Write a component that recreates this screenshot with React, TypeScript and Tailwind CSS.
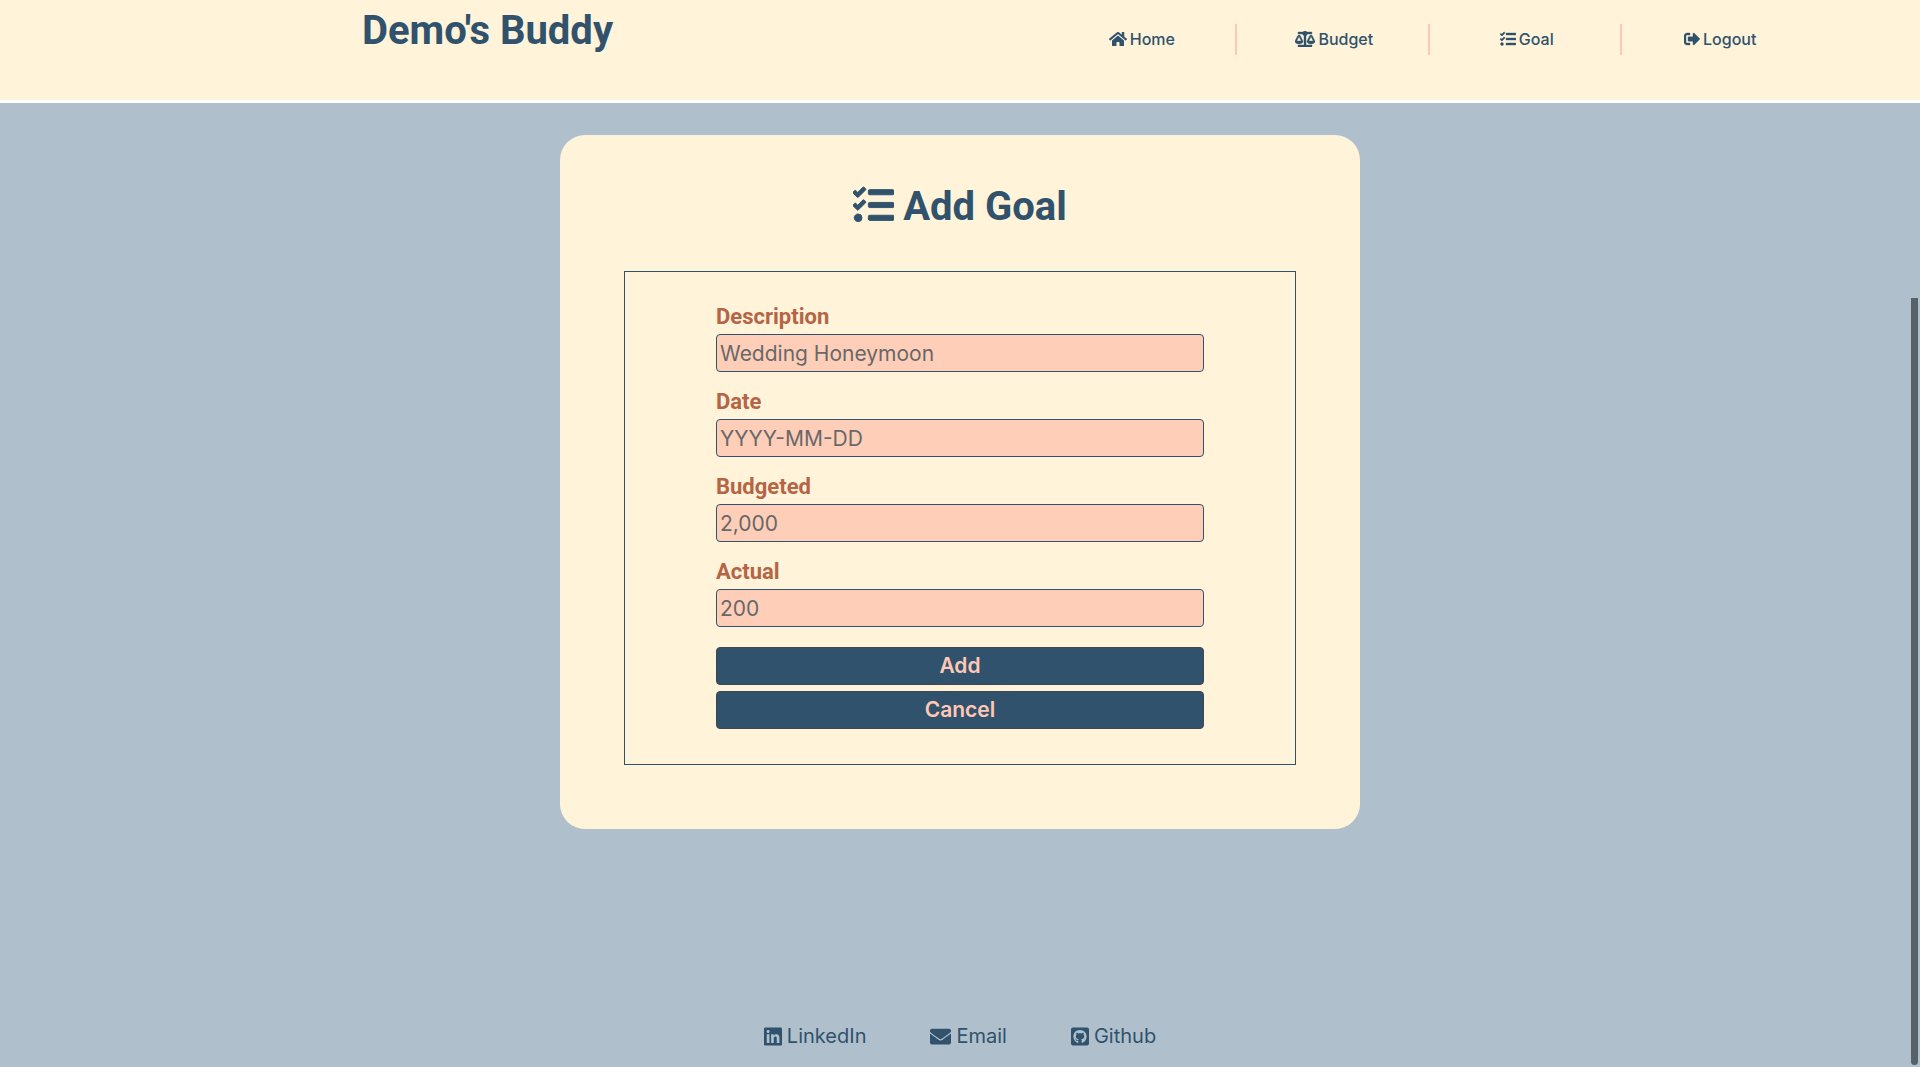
import {
  FaBalanceScale,
  FaEnvelope,
  FaGithubSquare,
  FaHome,
  FaLinkedin,
  FaSignOutAlt,
  FaTasks,
} from "react-icons/fa";

const navItems = [
  { label: "Home", icon: <FaHome className="h-4 w-[18px]" /> },
  { label: "Budget", icon: <FaBalanceScale className="h-4 w-5" strokeWidth={12} /> },
  { label: "Goal", icon: <FaTasks className="h-4 w-4" strokeWidth={12} /> },
  { label: "Logout", icon: <FaSignOutAlt className="h-4 w-4" strokeWidth={12} /> },
];

const fields = [
  { id: "description", label: "Description", placeholder: "Wedding Honeymoon" },
  { id: "date", label: "Date", placeholder: "YYYY-MM-DD" },
  { id: "budgeted", label: "Budgeted", placeholder: "2,000" },
  { id: "actual", label: "Actual", placeholder: "200" },
];

const footerLinks = [
  { label: "LinkedIn", icon: <FaLinkedin className="h-[21px] w-[18px]" /> },
  { label: "Email", icon: <FaEnvelope className="h-[21px] w-[21px]" /> },
  { label: "Github", icon: <FaGithubSquare className="h-[21px] w-[18px]" /> },
];

function Header() {
  return (
    <header className="flex h-[103px] items-start justify-between border-b-[3px] border-white bg-[#fff3d9] pr-[5.5%] pl-[18.85%]">
      <h1 className="pt-[7px] font-['Roboto',sans-serif] text-[40px] leading-[48px] font-bold whitespace-nowrap">
        Demo's Buddy
      </h1>
      <nav className="w-[53%] pt-6">
        <ul className="grid grid-cols-4">
          {navItems.map((item) => (
            <li
              key={item.label}
              className="flex h-[31px] items-center justify-center border-r-2 border-[#ffc8b4] pl-1 last:border-r-0"
            >
              <a href="#" className="flex items-center gap-[3px] pb-[2px] text-base leading-6 font-medium">
                {item.icon}
                {item.label}
              </a>
            </li>
          ))}
        </ul>
      </nav>
    </header>
  );
}

function GoalForm() {
  return (
    <form className="mt-10 flex flex-col border border-[#30526c] px-[91px] pt-[30px] pb-[35px]">
      {fields.map((field) => (
        <div key={field.id} className="mb-[15px] flex flex-col">
          <label
            htmlFor={field.id}
            className="mb-[2px] font-['Roboto',sans-serif] text-[22px] leading-[30px] font-bold text-[#b56446]"
          >
            {field.label}
          </label>
          <input
            id={field.id}
            type="text"
            placeholder={field.placeholder}
            className="h-[38px] w-full rounded border border-[#30526c] bg-[#ffceb8] px-[3px] text-[21px] placeholder:text-[#686868] placeholder:opacity-100"
          />
        </div>
      ))}
      <div className="mt-[5px] flex flex-col gap-[6px]">
        <button
          type="submit"
          className="h-[38px] rounded border border-[#3f4652] bg-[#30526c] text-[21px] leading-8 font-semibold text-[#ffc8b4]"
        >
          Add
        </button>
        <button
          type="button"
          className="h-[38px] rounded border border-[#3f4652] bg-[#30526c] text-[21px] leading-8 font-semibold text-[#ffc8b4]"
        >
          Cancel
        </button>
      </div>
    </form>
  );
}

export default function App() {
  return (
    <div className="flex min-h-screen flex-col bg-[#afc0cc] font-['Inter',sans-serif] text-[#30526c]">
      <Header />
      <main className="flex flex-1 flex-col items-center pt-8">
        <section className="w-full max-w-[800px] rounded-[25px] bg-[#fff3d9] px-16 pt-12 pb-16">
          <h2 className="flex items-start justify-center gap-[9px] font-['Roboto',sans-serif] text-[40px] leading-[48px] font-bold">
            <FaTasks className="h-11 w-[41px]" strokeWidth={12} />
            Add Goal
          </h2>
          <GoalForm />
        </section>
      </main>
      <footer className="flex justify-center gap-16 pb-4">
        {footerLinks.map((link) => (
          <a key={link.label} href="#" className="flex items-center gap-[5px] text-xl leading-[30px]">
            {link.icon}
            {link.label}
          </a>
        ))}
      </footer>
      <div className="fixed top-[298px] right-[2px] bottom-[2px] w-[7px] rounded-b-full bg-[#566169]" />
    </div>
  );
}
